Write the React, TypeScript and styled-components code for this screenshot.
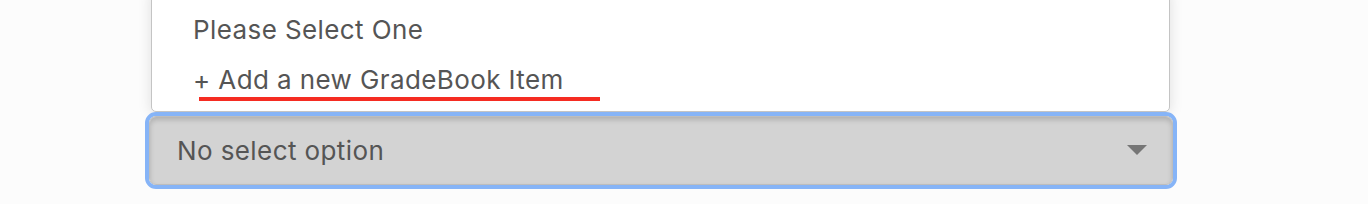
import styled, { createGlobalStyle } from "styled-components";

const GlobalStyle = createGlobalStyle`
  html, body {
    margin: 0;
    padding: 0;
    background: #fcfcfc;
    overflow: hidden;
  }
  body {
    font-family: Inter, "Liberation Sans", Arial, sans-serif;
  }
`;

const Page = styled.div`
  width: 1368px;
  height: 204px;
  padding-left: 145px;
  box-sizing: border-box;
  overflow: hidden;
`;

const Field = styled.div`
  width: 1032px;
  display: flex;
  flex-direction: column;
`;

const Menu = styled.ul`
  list-style: none;
  margin: -10px 7px 0 6px;
  padding: 14px 0 6px 0;
  background: #fff;
  border: 1px solid #c4c4c4;
  border-radius: 0 0 5px 5px;
  box-shadow: 0 2px 14px rgba(0, 0, 0, 0.12);
`;

const Option = styled.li<{ $marked?: boolean }>`
  position: relative;
  padding-left: 41px;
  height: 50px;
  line-height: 50px;
  font-size: 26px;
  color: #555;
  letter-spacing: 0.4px;
  &::after {
    content: "";
    display: ${({ $marked }) => ($marked ? "block" : "none")};
    position: absolute;
    left: 47px;
    top: 42px;
    width: 401px;
    height: 4px;
    background: #f52c22;
  }
`;

const Ring = styled.div`
  border: 4px solid #86b4f7;
  border-radius: 11px;
`;

const SelectBox = styled.div`
  height: 67px;
  display: flex;
  align-items: center;
  justify-content: space-between;
  padding: 0 25px 0 27px;
  background: #d3d3d3;
  border: 1px solid #bdbdbd;
  border-radius: 7px;
  box-shadow: inset 0 3px 5px rgba(0, 0, 0, 0.16);
  font-size: 26px;
  color: #555;
  letter-spacing: 0.4px;
`;

const Caret = styled.span`
  width: 0;
  height: 0;
  border-left: 10px solid transparent;
  border-right: 10px solid transparent;
  border-top: 10px solid #767676;
  margin-top: -2px;
`;

export default function App() {
  return (
    <Page>
      <GlobalStyle />
      <Field>
        <Menu>
          <Option>Please Select One</Option>
          <Option $marked>+ Add a new GradeBook Item</Option>
        </Menu>
        <Ring>
          <SelectBox>
            <span>No select option</span>
            <Caret />
          </SelectBox>
        </Ring>
      </Field>
    </Page>
  );
}
